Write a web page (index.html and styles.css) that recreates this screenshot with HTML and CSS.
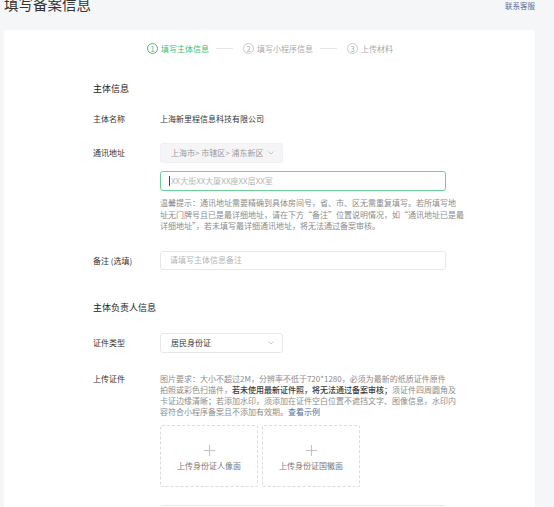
FILE: index.html
```html
<!DOCTYPE html>
<html lang="zh-CN">
<head>
<meta charset="utf-8">
<title>填写备案信息</title>
<link rel="stylesheet" href="styles.css">
</head>
<body>
<div class="page">
  <header class="top">
    <h1 class="title">填写备案信息</h1>
    <a class="help">联系客服</a>
  </header>
  <main class="card">
    <div class="steps">
      <div class="step active"><span class="num">1</span><span>填写主体信息</span></div>
      <span class="sep"></span>
      <div class="step"><span class="num">2</span><span>填写小程序信息</span></div>
      <span class="sep"></span>
      <div class="step"><span class="num">3</span><span>上传材料</span></div>
    </div>

    <section class="form">
      <h2 class="sec-title s1">主体信息</h2>

      <div class="row r-name">
        <div class="lbl">主体名称</div>
        <div class="val">上海新里程信息科技有限公司</div>
      </div>

      <div class="row r-addr">
        <div class="lbl tall">通讯地址</div>
        <div class="val">
          <div class="select disabled">
            <span>上海市&gt; 市辖区&gt; 浦东新区</span>
            <svg class="chev" width="6" height="4" viewBox="0 0 6 4"><polyline points="0.5,0.5 3,3 5.5,0.5" fill="none" stroke="#b8b8b8" stroke-width="0.8"/></svg>
          </div>
          <div class="input focus"><span class="caret"></span><span class="ph">XX大街XX大厦XX座XX层XX室</span></div>
          <p class="hint">温馨提示：通讯地址需要精确到具体房间号，省、市、区无需重复填写。若所填写地<br>址无门牌号且已是最详细地址，请在下方“备注”位置说明情况，如“通讯地址已是最<br>详细地址”，若未填写最详细通讯地址，将无法通过备案审核。</p>
        </div>
      </div>

      <div class="row r-note">
        <div class="lbl note">备注 (选填)</div>
        <div class="val">
          <div class="input short"><span class="ph">请填写主体信息备注</span></div>
        </div>
      </div>

      <h2 class="sec-title s2">主体负责人信息</h2>

      <div class="row r-type">
        <div class="lbl tall">证件类型</div>
        <div class="val">
          <div class="select">
            <span>居民身份证</span>
            <svg class="chev" width="6" height="4" viewBox="0 0 6 4"><polyline points="0.5,0.5 3,3 5.5,0.5" fill="none" stroke="#b8b8b8" stroke-width="0.8"/></svg>
          </div>
        </div>
      </div>

      <div class="row r-upload">
        <div class="lbl small">上传证件</div>
        <div class="val">
          <p class="req">图片要求：大小不超过2M，分辨率不低于720*1280，必须为最新的纸质证件原件<br>拍照或彩色扫描件，<strong>若未使用最新证件照，将无法通过备案审核；</strong>须证件四周圆角及<br>卡证边缘清晰；若添加水印，须添加在证件空白位置不遮挡文字、图像信息，水印内<br>容符合小程序备案且不添加有效期。<a class="link">查看示例</a></p>
          <div class="uploads">
            <div class="up">
              <svg width="11" height="11" viewBox="0 0 11 11"><line x1="5.5" y1="0" x2="5.5" y2="11" stroke="#c4c4c4" stroke-width="1.1"/><line x1="0" y1="5.5" x2="11" y2="5.5" stroke="#c4c4c4" stroke-width="1.1"/></svg>
              <span>上传身份证人像面</span>
            </div>
            <div class="up">
              <svg width="11" height="11" viewBox="0 0 11 11"><line x1="5.5" y1="0" x2="5.5" y2="11" stroke="#c4c4c4" stroke-width="1.1"/><line x1="0" y1="5.5" x2="11" y2="5.5" stroke="#c4c4c4" stroke-width="1.1"/></svg>
              <span>上传身份证国徽面</span>
            </div>
          </div>
        </div>
      </div>

      <div class="row r-next">
        <div class="lbl tall"></div>
        <div class="val">
          <div class="input"></div>
        </div>
      </div>
    </section>
  </main>
</div>
</body>
</html>
```

FILE: styles.css
```css
* { box-sizing: border-box; }

body {
  margin: 0;
  background: #f5f6f8;
  font-family: "Noto Sans CJK SC", "Noto Sans", sans-serif;
  color: #353535;
  overflow: hidden;
}

.page {
  margin: 0 19px 0 4px;
}

.top {
  display: flex;
  justify-content: space-between;
  align-items: flex-start;
  height: 30px;
}

.title {
  margin: -4px 0 0;
  font-size: 14.5px;
  line-height: 15px;
  font-weight: 400;
  color: #333;
}

.help {
  font-size: 7.5px;
  line-height: 12px;
  color: #5f6f94;
}

.card {
  background: #fff;
  border-radius: 3px;
  padding: 13px 0 60px;
  min-height: 560px;
}

.steps {
  display: flex;
  align-items: center;
  padding-left: 143px;
  height: 11px;
}

.step {
  display: flex;
  align-items: center;
  gap: 3px;
  color: #ababab;
  font-size: 8px;
  line-height: 11px;
}

.num {
  width: 11px;
  height: 11px;
  border: 1px solid #c9c9c9;
  border-radius: 50%;
  display: flex;
  align-items: center;
  justify-content: center;
  font-size: 7.5px;
  line-height: 1;
}

.step.active { color: #3dbf74; }
.step.active .num { border-color: #3dbf74; }

.sep {
  width: 17px;
  height: 1px;
  background: #e6e6e6;
  margin: 0 10px 0 7px;
}

.form {
  padding-left: 89px;
}

.sec-title {
  margin: 0;
  font-size: 9px;
  line-height: 12px;
  font-weight: 400;
  color: #222;
}
.sec-title.s1 { margin-top: 29px; }
.sec-title.s2 { margin-top: 32px; }

.row {
  display: grid;
  grid-template-columns: 67px 286px;
  align-items: start;
}
.r-name { margin-top: 18px; }
.r-addr { margin-top: 18px; }
.r-note { margin-top: 19px; }
.r-type { margin-top: 19px; }
.r-upload { margin-top: 20px; }
.r-next { margin-top: 18px; }

.lbl {
  font-size: 8px;
  line-height: 12px;
  color: #353535;
  white-space: nowrap;
}
.lbl.tall { line-height: 20px; }
.lbl.note { line-height: 19px; }
.lbl.small { line-height: 11px; }

.val {
  font-size: 8px;
  line-height: 12px;
}

.select {
  width: 123px;
  height: 20px;
  display: flex;
  align-items: center;
  justify-content: space-between;
  padding: 0 8px 0 10px;
  border: 1px solid #e8e8e8;
  border-radius: 3px;
  background: #fff;
  color: #353535;
  font-size: 8px;
}
.select.disabled {
  background: #f5f5f7;
  border-color: #f0f0f2;
  color: #9a9a9a;
}
.chev { display: block; }

.input {
  width: 286px;
  height: 20px;
  display: flex;
  align-items: center;
  padding-left: 9px;
  border: 1px solid #e8e8e8;
  border-radius: 3px;
  font-size: 8px;
}
.input.focus {
  margin-top: 8px;
  border-color: #6ad197;
}
.input.short { height: 19px; }

.ph { color: #b5b5b5; }

.caret {
  width: 1px;
  height: 10px;
  background: #444;
  margin-left: -1px;
  margin-right: 1px;
}

.hint {
  margin: 6px 0 0;
  font-size: 8px;
  line-height: 11.5px;
  color: #8c8c8c;
  white-space: nowrap;
}

.req {
  margin: 0;
  font-size: 8px;
  line-height: 11px;
  color: #8c8c8c;
  white-space: nowrap;
}
.req strong {
  font-weight: 500;
  color: #3a3a3a;
}
.link { color: #576b95; }

.uploads {
  display: flex;
  gap: 4px;
  margin-top: 8px;
}

.up {
  width: 98px;
  height: 62px;
  border: 1px dashed #dcdcdc;
  border-radius: 2px;
  display: flex;
  flex-direction: column;
  align-items: center;
  padding-top: 19px;
  gap: 4px;
  font-size: 8px;
  line-height: 11px;
  color: #777;
}
.up svg { display: block; }
```
